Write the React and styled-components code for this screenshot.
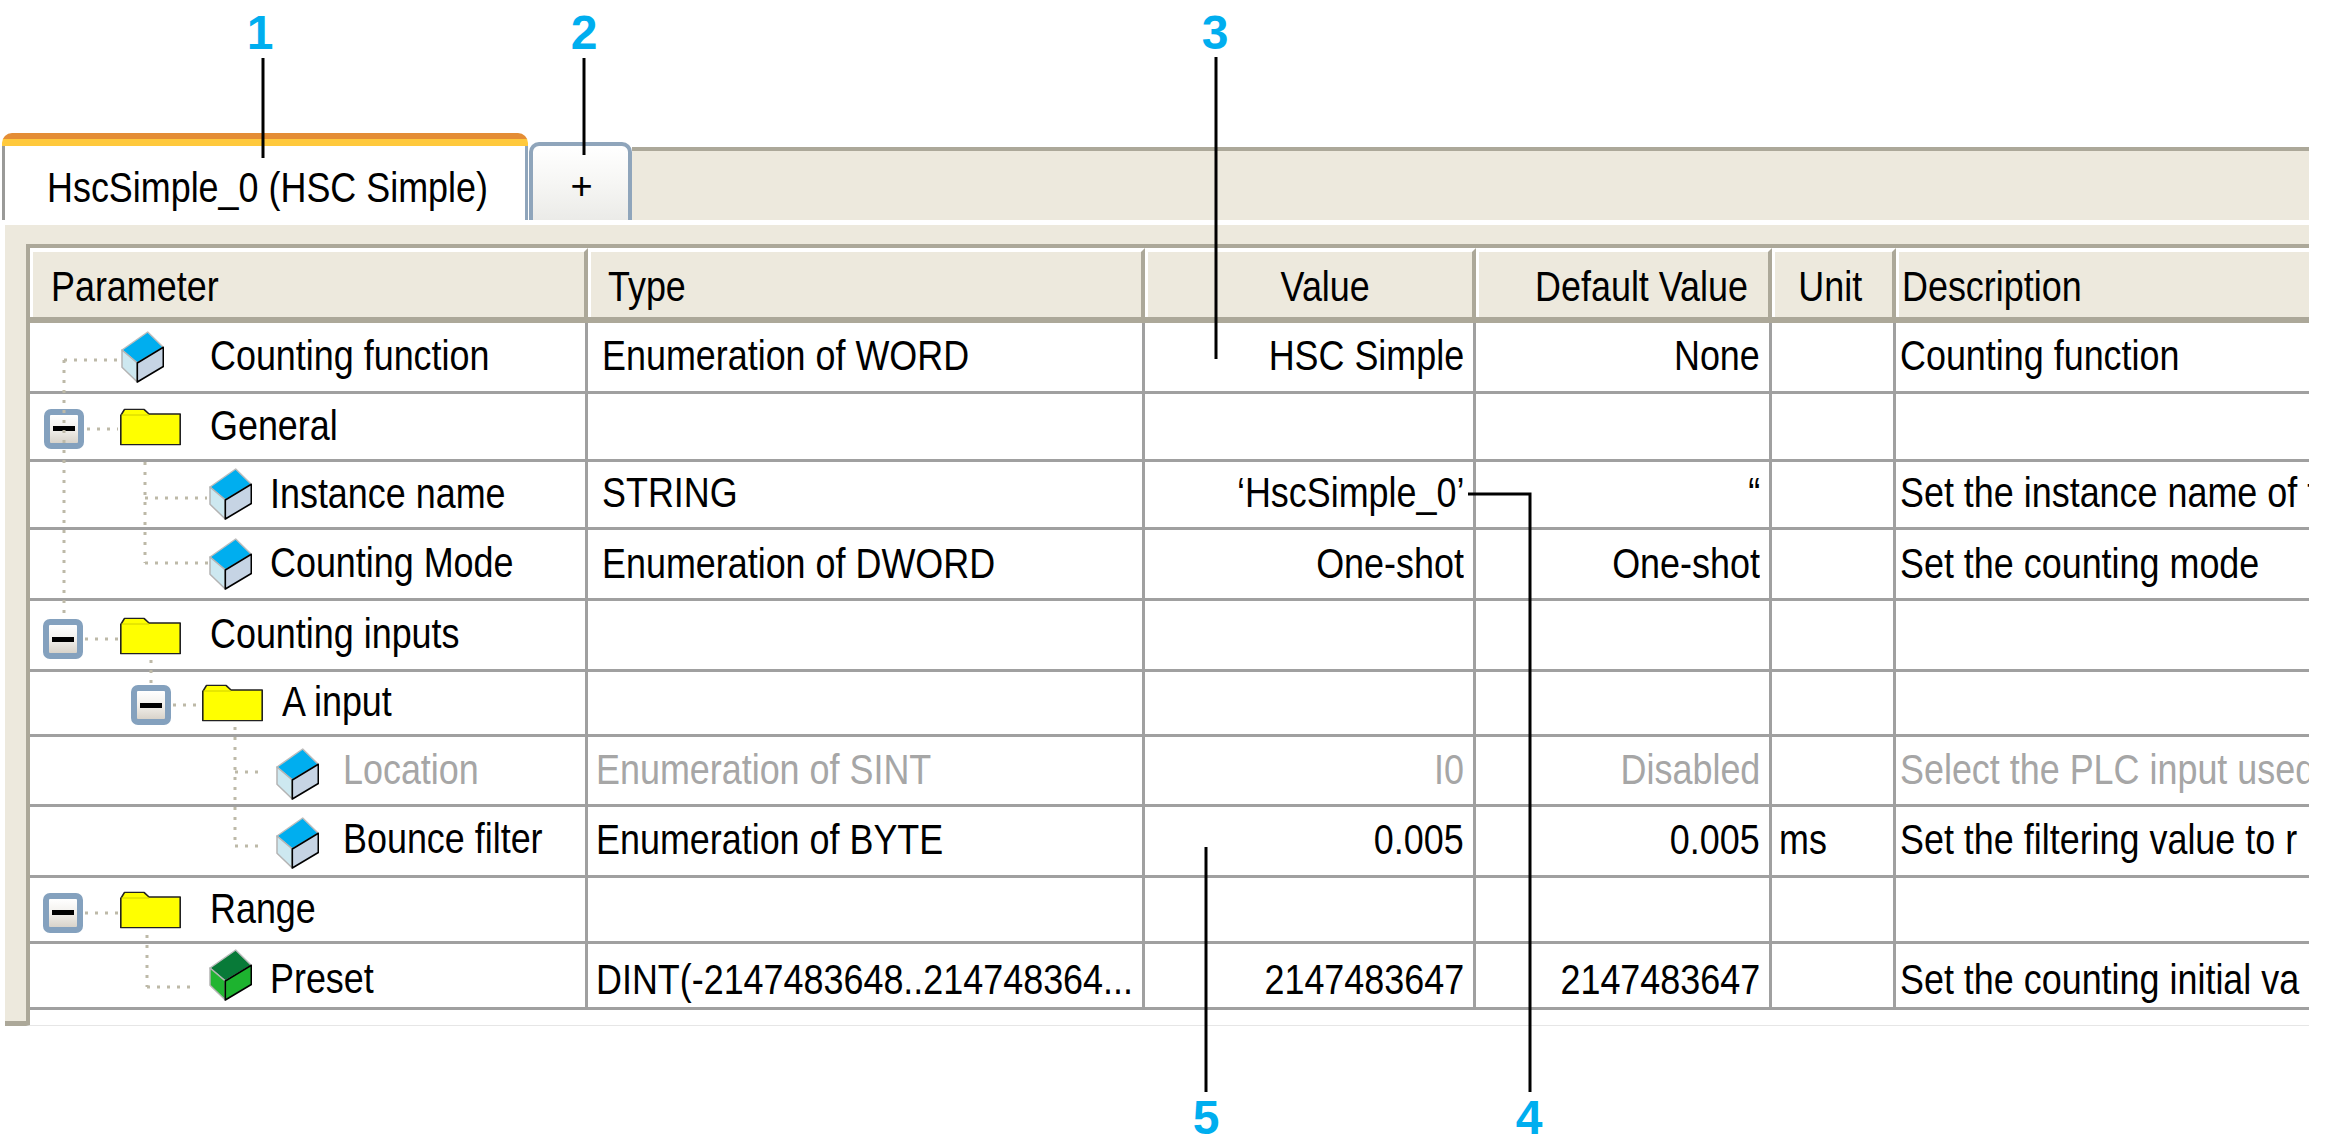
import React from "react";
import styled, { createGlobalStyle } from "styled-components";

const Global = createGlobalStyle`
  html, body { margin: 0; padding: 0; background: #fff; }
  body { font-family: "Liberation Sans", Arial, sans-serif; color: #000; overflow: hidden; }
`;

const Page = styled.div`
  position: relative;
  width: 2344px;
  height: 1148px;
  padding-top: 133px;
  box-sizing: border-box;
`;
const Window = styled.div`
  width: 2309px;
  display: flex;
  flex-direction: column;
  overflow: hidden;
`;
const TabStrip = styled.div`
  height: 87px;
  display: flex;
  align-items: flex-end;
  padding-left: 2px;
`;
const ActiveTab = styled.div`
  width: 526px;
  height: 87px;
  box-sizing: border-box;
  border-radius: 10px 10px 0 0;
  background:
    linear-gradient(#9a9a98, #9a9a98) 0 13px / 3px 100% no-repeat,
    linear-gradient(#8fa5bb, #8fa5bb) 100% 13px / 3px 100% no-repeat,
    linear-gradient(#e48d35 0 6px, #ffc93c 6px 13px, #fff 13px);
  display: flex;
  align-items: center;
  padding: 21px 0 0 45px;
`;
const PlusTab = styled.div`
  width: 103px;
  height: 78px;
  margin-left: 1px;
  box-sizing: border-box;
  border: 4px solid #8fa5bb;
  border-bottom: none;
  border-radius: 10px 10px 0 0;
  background: linear-gradient(#fff, #f6f6f4 50%, #ebebe8);
  display: flex;
  align-items: center;
  justify-content: center;
  font-size: 38px;
  padding: 6px 0 0 2px;
`;
const TabFiller = styled.div`
  flex: 1;
  height: 73px;
  box-sizing: border-box;
  border-top: 4px solid #aca899;
  background: #ede9dd;
`;
const Panel = styled.div`
  margin-top: 5px;
  display: flex;
`;
const Rail = styled.div`
  width: 21px;
  margin-left: 5px;
  background: #ede9dd;
  border-bottom: 5px solid #aca899;
`;
const Main = styled.div`
  flex: 1;
  min-width: 0;
  display: flex;
  flex-direction: column;
`;
const TopBand = styled.div`
  height: 19px;
  background: #ede9dd;
`;
const Table = styled.div`
  border-top: 4px solid #aca899;
  border-left: 4px solid #aca899;
  padding-bottom: 15px;
  background: #fff;
  border-bottom: 1px solid #e6e6e6;
`;
const columns = "558px 557px 331px 296px 124px 1fr";
const HeaderRow = styled.div`
  display: grid;
  grid-template-columns: ${columns};
  height: 75px;
  box-sizing: border-box;
  border-bottom: 6px solid #aca899;
  box-shadow: inset 0 -1px 0 #a0a0a0;
`;
const HeaderCell = styled.div`
  background: #ede9dd;
  border-left: 3px solid #fff;
  border-top: 4px solid #fff;
  border-right: 4px solid #aca899;
  padding: 3px ${(p) => p.$right ?? 0}px 0 ${(p) => p.$left ?? 0}px;
  display: flex;
  align-items: center;
  justify-content: ${(p) => p.$justify || "flex-start"};
  min-width: 0;
  &:last-child { border-right: none; }
`;
const Row = styled.div`
  display: grid;
  grid-template-columns: ${columns};
  height: ${(p) => p.$h}px;
  box-sizing: border-box;
  border-bottom: 3px solid #a0a0a0;
`;
const Cell = styled.div`
  border-right: 3px solid #a0a0a0;
  display: flex;
  align-items: center;
  justify-content: ${(p) => p.$justify || "flex-start"};
  padding: 0 ${(p) => p.$right ?? 0}px 0 ${(p) => p.$left ?? 0}px;
  overflow: hidden;
  min-width: 0;
  &:last-child { border-right: none; }
`;
const ParamCell = styled(Cell)`
  position: relative;
`;
const Text = styled.span`
  display: inline-block;
  flex: none;
  white-space: nowrap;
  font-size: 43px;
  line-height: 48px;
  transform: scaleX(0.835);
  transform-origin: ${(p) => p.$origin || "left"} center;
  color: ${(p) => (p.$muted ? "#a6a6a6" : "#000")};
  margin-bottom: ${(p) => p.$shift ?? 5}px;
`;
const Abs = styled.div`
  position: absolute;
  left: ${(p) => p.$x}px;
  top: 50%;
  margin-top: ${(p) => p.$dy ?? 0}px;
  transform: translateY(-50%);
  display: flex;
`;
const Expander = styled.div`
  width: 40px;
  height: 40px;
  box-sizing: border-box;
  border: 6px solid #84a1be;
  border-radius: 7px;
  background: linear-gradient(#fff, #f2f0ec 50%, #d8d3ca);
  display: flex;
  align-items: center;
  justify-content: center;
  &::before {
    content: "";
    width: 22px;
    height: 5px;
    background: #000;
  }
`;
const Callout = styled.div`
  position: absolute;
  left: ${(p) => p.$x}px;
  top: ${(p) => p.$y}px;
  width: 40px;
  margin-left: -20px;
  text-align: center;
  font-size: 48px;
  line-height: 48px;
  font-weight: 700;
  color: #00aeef;
`;
const Overlay = styled.svg`
  position: absolute;
  left: 0;
  top: 0;
  width: 2344px;
  height: 1148px;
  pointer-events: none;
`;

const Cube = ({ top = "#00aeef", left = "#cde8f0", right = "#c6d4e4" }) => (
  <svg width="43" height="52" viewBox="0 0 43 52">
    <path d="M26.7 1 1 19 16.3 32 42.3 16.3Z" fill={top} stroke="#bdbdbd" strokeWidth="1.5" strokeLinejoin="round" />
    <path d="M1 19V36.3L16.3 51V32Z" fill={left} stroke="#b4b4b4" strokeWidth="1.5" strokeLinejoin="round" />
    <path d="M16.3 32 42.3 16.3V35.5L16.3 51Z" fill={right} stroke="#000" strokeWidth="1.6" strokeLinejoin="round" />
  </svg>
);
const Folder = () => (
  <svg width="61" height="37" viewBox="0 0 61 37">
    <path d="M.8 7 4.5 .8H24L29 5.5H60.2V36.2H.8Z" fill="#ffff00" stroke="#222" strokeWidth="1.6" strokeLinejoin="round" />
    <path d="M1.5 6.5H29" stroke="#d0d000" strokeWidth="1" fill="none" />
  </svg>
);

const rows = [
  { h: 71, pad: 5, cube: 121, text: 210, name: "Counting function", type: "Enumeration of WORD", tl: 14, value: "HSC Simple", def: "None", desc: "Counting function" },
  { h: 68, pad: 6, box: 14, boxDy: 2, folder: 120, text: 210, name: "General", nameDy: -2 },
  { h: 68, pad: 6, cube: 209, cubeDy: -1, text: 270, name: "Instance name", type: "STRING", tl: 14, value: "‘HscSimple_0’", def: "“", desc: "Set the instance name of t" },
  { h: 71, pad: 2, cube: 209, text: 270, name: "Counting Mode", type: "Enumeration of DWORD", tl: 14, value: "One-shot", def: "One-shot", desc: "Set the counting mode" },
  { h: 71, pad: 5, box: 13, boxDy: 4, folder: 120, folderDy: 1, text: 210, name: "Counting inputs", nameDy: -2 },
  { h: 65, pad: 2, box: 101, boxDy: 2, folder: 202, text: 282, name: "A input" },
  { h: 70, pad: 3, muted: true, cube: 276, cubeDy: 3, text: 343, name: "Location", type: "Enumeration of SINT", tl: 8, value: "I0", def: "Disabled", desc: "Select the PLC input used" },
  { h: 71, pad: 4, cube: 276, cubeDy: 2, text: 343, name: "Bounce filter", nameDy: -3, type: "Enumeration of BYTE", tl: 8, value: "0.005", def: "0.005", unit: "ms", desc: "Set the filtering value to r" },
  { h: 66, pad: 5, box: 13, boxDy: 3, folder: 120, text: 210, name: "Range", nameDy: -2 },
  { h: 66, pad: -7, green: true, cube: 209, cubeDy: -1, text: 270, name: "Preset", type: "DINT(-2147483648..214748364...", tl: 8, value: "2147483647", def: "2147483647", desc: "Set the counting initial va", nameDy: 2 },
];

const headers = [
  { label: "Parameter", left: 18 },
  { label: "Type", left: 17 },
  { label: "Value", justify: "flex-end", right: 102, origin: "right" },
  { label: "Default Value", justify: "flex-end", right: 20, origin: "right" },
  { label: "Unit", justify: "center", origin: "center", right: 6 },
  { label: "Description", left: 3 },
];

const dots = [
  "M64 360H121", "M64 360V619", "M87 429H118", "M145 462V563", "M145 498H207", "M145 563H209",
  "M85 639H118", "M151 660V685", "M173 705H200", "M235 727V846", "M235 772H263", "M235 846H263",
  "M85 913H118", "M147 935V987", "M147 987H197",
];
const leaders = [
  "M263 58V158", "M584 58V155", "M1216 57V359", "M1206 847V1092", "M1468 494H1530V1092",
];
const marks = [
  { n: "1", x: 260, y: 9 }, { n: "2", x: 584, y: 9 }, { n: "3", x: 1215, y: 9 },
  { n: "4", x: 1529, y: 1094 }, { n: "5", x: 1206, y: 1094 },
];

export default function App() {
  return (
    <Page>
      <Global />
      <Window>
        <TabStrip>
          <ActiveTab>
            <Text $shift={0}>HscSimple_0 (HSC Simple)</Text>
          </ActiveTab>
          <PlusTab>+</PlusTab>
          <TabFiller />
        </TabStrip>
        <Panel>
          <Rail />
          <Main>
            <TopBand />
            <Table>
              <HeaderRow>
                {headers.map((h) => (
                  <HeaderCell key={h.label} $left={h.left} $right={h.right} $justify={h.justify}>
                    <Text $origin={h.origin} $shift={0}>{h.label}</Text>
                  </HeaderCell>
                ))}
              </HeaderRow>
              {rows.map((r) => (
                <Row key={r.name} $h={r.h}>
                  <ParamCell>
                    {r.box != null && <Abs $x={r.box} $dy={r.boxDy}><Expander /></Abs>}
                    {r.folder != null && <Abs $x={r.folder - 30} $dy={r.folderDy}><Folder /></Abs>}
                    {r.cube != null && (
                      <Abs $x={r.cube - 30} $dy={r.cubeDy}>
                        {r.green ? <Cube top="#087a38" left="#22b532" right="#1db32f" /> : <Cube />}
                      </Abs>
                    )}
                    <Abs $x={r.text - 30} $dy={r.nameDy ?? -2}>
                      <Text $muted={r.muted} $shift={0}>{r.name}</Text>
                    </Abs>
                  </ParamCell>
                  <Cell $left={r.tl}>
                    {r.type && <Text $muted={r.muted} $shift={r.pad}>{r.type}</Text>}
                  </Cell>
                  <Cell $justify="flex-end" $right={9}>
                    {r.value && <Text $origin="right" $muted={r.muted} $shift={r.pad}>{r.value}</Text>}
                  </Cell>
                  <Cell $justify="flex-end" $right={9}>
                    {r.def && <Text $origin="right" $muted={r.muted} $shift={r.pad}>{r.def}</Text>}
                  </Cell>
                  <Cell $left={7}>
                    {r.unit && <Text $shift={r.pad}>{r.unit}</Text>}
                  </Cell>
                  <Cell $left={4}>
                    {r.desc && <Text $muted={r.muted} $shift={r.pad}>{r.desc}</Text>}
                  </Cell>
                </Row>
              ))}
            </Table>
          </Main>
        </Panel>
      </Window>
      <Overlay viewBox="0 0 2344 1148">
        {dots.map((d) => (
          <path key={d} d={d} fill="none" stroke="#bdb9a8" strokeWidth="3" strokeDasharray="3 7" />
        ))}
        {leaders.map((d) => (
          <path key={d} d={d} fill="none" stroke="#000" strokeWidth="3" />
        ))}
      </Overlay>
      {marks.map((m) => (
        <Callout key={m.n} $x={m.x} $y={m.y}>{m.n}</Callout>
      ))}
    </Page>
  );
}
